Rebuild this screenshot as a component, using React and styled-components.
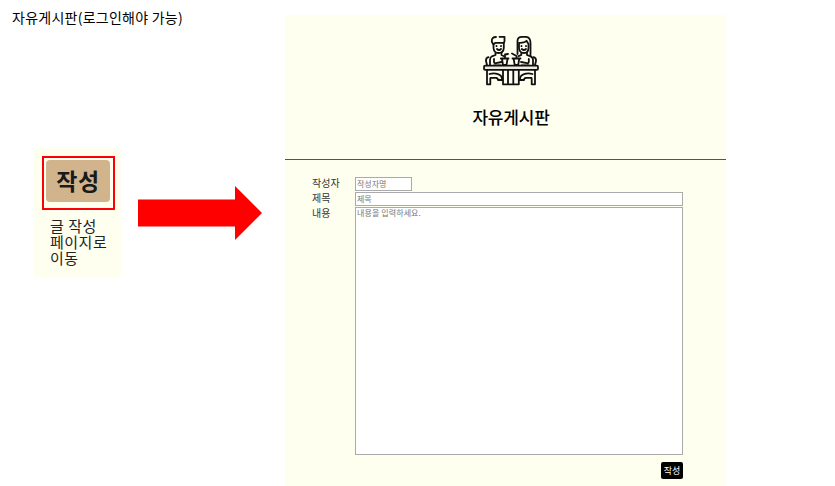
import React from "react";
import styled, { createGlobalStyle } from "styled-components";

const GlobalStyle = createGlobalStyle`
  *, *::before, *::after { box-sizing: border-box; }
  body {
    margin: 0;
    background: #fff;
    color: #000;
    font-family: "Noto Sans CJK KR", sans-serif;
  }
`;

const Page = styled.main`
  display: flex;
  width: 835px;
  height: 486px;
  overflow: hidden;
`;

const Guide = styled.section`
  flex: none;
  width: 285px;
`;

const GuideTitle = styled.h1`
  margin: 8px 0 0 12px;
  font-size: 14px;
  font-weight: 400;
  line-height: 18px;
  letter-spacing: 0.25px;
  white-space: nowrap;
`;

const Flow = styled.div`
  display: flex;
  align-items: flex-start;
  gap: 17px;
  margin: 122px 0 0 34px;
`;

const Note = styled.div`
  width: 87px;
  height: 129px;
  padding: 8px 0 0 8px;
  background: #ffffef;
`;

const Highlight = styled.div`
  width: 73px;
  height: 54px;
  padding: 2px;
  border: 2px solid #fb0007;
`;

const SampleButton = styled.button`
  display: block;
  width: 64px;
  height: 42px;
  padding: 0 0 2px;
  border: 0;
  border-radius: 4px;
  background: #d2b48c;
  color: #1a1a1a;
  font: 700 23px/38px "Noto Sans CJK KR", sans-serif;
  letter-spacing: 0.6px;
`;

const NoteText = styled.p`
  margin: 8px 0 0 8px;
  color: #222;
  font-size: 15px;
  line-height: 16px;
  letter-spacing: 0.5px;
  white-space: nowrap;
`;

const Arrow = styled.svg`
  display: block;
  flex: none;
  margin-top: 38px;
`;

const Board = styled.section`
  flex: none;
  width: 441px;
  height: 471px;
  margin-top: 15px;
  background: #ffffef;
`;

const BoardHeader = styled.header`
  display: flex;
  flex-direction: column;
  align-items: center;
  height: 145px;
  padding: 20px 0 0 11px;
  border-bottom: 1px solid #555550;
`;

const BoardTitle = styled.h2`
  margin: 18px 0 0;
  font-size: 17px;
  font-weight: 500;
  line-height: 24px;
  letter-spacing: -0.2px;
`;

const Form = styled.form`
  display: grid;
  grid-template-columns: 43px 328px;
  grid-template-rows: 14px 14px 248px;
  row-gap: 1px;
  padding: 17px 0 0 27px;
`;

const Label = styled.label`
  color: #333;
  font-size: 10px;
  line-height: 11px;
`;

const Field = styled.input`
  display: block;
  width: ${(p) => p.$width}px;
  height: 14px;
  padding: 0 1px 2px;
  border: 1px solid #aaa;
  border-radius: 0;
  outline: 0;
  background: #fff;
  font: 8px/10px "Noto Sans CJK KR", sans-serif;
  &::placeholder { color: #777; opacity: 1; }
`;

const Content = styled.textarea`
  display: block;
  width: 328px;
  height: 248px;
  padding: 0 1px;
  border: 1px solid #aaa;
  border-radius: 0;
  outline: 0;
  resize: none;
  background: #fff;
  font: 8px/10px "Noto Sans CJK KR", sans-serif;
  letter-spacing: 0.1px;
  &::placeholder { color: #777; opacity: 1; }
`;

const SubmitButton = styled.button`
  grid-column: 2;
  justify-self: end;
  width: 22px;
  height: 17px;
  margin-top: 6px;
  padding: 0;
  border: 0;
  border-radius: 2px;
  background: #000;
  color: #fff;
  font: 9px/16px "Noto Sans CJK KR", sans-serif;
`;

function PeopleIcon() {
  return (
    <svg width="56" height="52" viewBox="0 0 56 52" fill="none" stroke="#111" strokeWidth="1.8" strokeLinecap="round" strokeLinejoin="round">
      {/* left guest */}
      <path d="M13 2Q8.5 2 8.8 6.5L10.5 10V13Q11 18 15.5 18Q20.5 18 20.8 13V8.5L21.5 6V1.8H16.5" />
      <path d="M11 9L12.5 7.8H20.5M13.5 10.8V11.2M18 10.8V11.2M14 14Q16 16 18 14" />
      <path d="M12.5 17.8V20L9 21.3Q7 22.3 7 25V30M18.5 17.8V20L21 21.2M11 24V27Q11 28.5 13 28.2L18.5 27M11 30.5H18" />
      {/* right guest */}
      <path d="M34.5 19V6Q34.5 1.8 39 1.8H43Q47.5 2 47.5 8V20.5" />
      <path d="M36 7.8Q42 8 43.5 5.8L45.5 9V13Q45.3 18 41 18Q36.5 18 36 13V8" />
      <path d="M38.5 10.8V11.2M43 10.8V11.2M38.8 14Q41 16 43 14" />
      <path d="M38.3 17.8V20L35.5 21.2M44 17.8V20L47.5 21.3Q50 22.3 50 25V30M45.8 24V27Q45.8 28.5 44 28.2L38 27M46 30.5H38.5" />
      {/* cups and straws */}
      <path d="M17.8 23.5H25.5M19 24L20 30H23.5L24.5 24M22 23V19.5L25 19M29.5 23.5H37.5M30.7 24L31.7 30H35.2L36.2 24M33.5 23V21L29 18.5" />
      {/* table and chairs */}
      <rect x="1" y="30.7" width="54" height="4.2" rx="1.2" fill="#eee9df" />
      <path d="M20 35V49.3H35.8V35M25 35V49M30.3 35V49" />
      <path d="M4 35V49.3H7.3V43.5M6.5 39Q11 37.5 15 39.2Q19 40.5 19 44M7.5 42.8H13Q15 43 15 45H19.5M52 35V49.3H48.7V43.5M49.5 39Q45 37.5 41 39.2Q37 40.5 37 44M48.5 42.8H43Q41 43 41 45H36.5M5.5 22.2Q2.7 23 3 26L4 30M50.5 22.2Q53.3 23 53 26L52 30" />
    </svg>
  );
}

export default function App() {
  return (
    <>
      <GlobalStyle />
      <Page>
        <Guide>
          <GuideTitle>자유게시판(로그인해야 가능)</GuideTitle>
          <Flow>
            <Note>
              <Highlight>
                <SampleButton type="button">작성</SampleButton>
              </Highlight>
              <NoteText>
                글 작성<br />페이지로<br />이동
              </NoteText>
            </Note>
            <Arrow width="124" height="54" viewBox="0 0 124 54">
              <path d="M0 13.4H97V0L124 27L97 54V40.6H0Z" fill="#f00" />
            </Arrow>
          </Flow>
        </Guide>
        <Board>
          <BoardHeader>
            <PeopleIcon />
            <BoardTitle>자유게시판</BoardTitle>
          </BoardHeader>
          <Form>
            <Label htmlFor="writer">작성자</Label>
            <Field id="writer" $width={57} placeholder="작성자명" />
            <Label htmlFor="subject">제목</Label>
            <Field id="subject" $width={328} placeholder="제목" />
            <Label htmlFor="content">내용</Label>
            <Content id="content" placeholder="내용을 입력하세요." />
            <SubmitButton type="button">작성</SubmitButton>
          </Form>
        </Board>
      </Page>
    </>
  );
}
